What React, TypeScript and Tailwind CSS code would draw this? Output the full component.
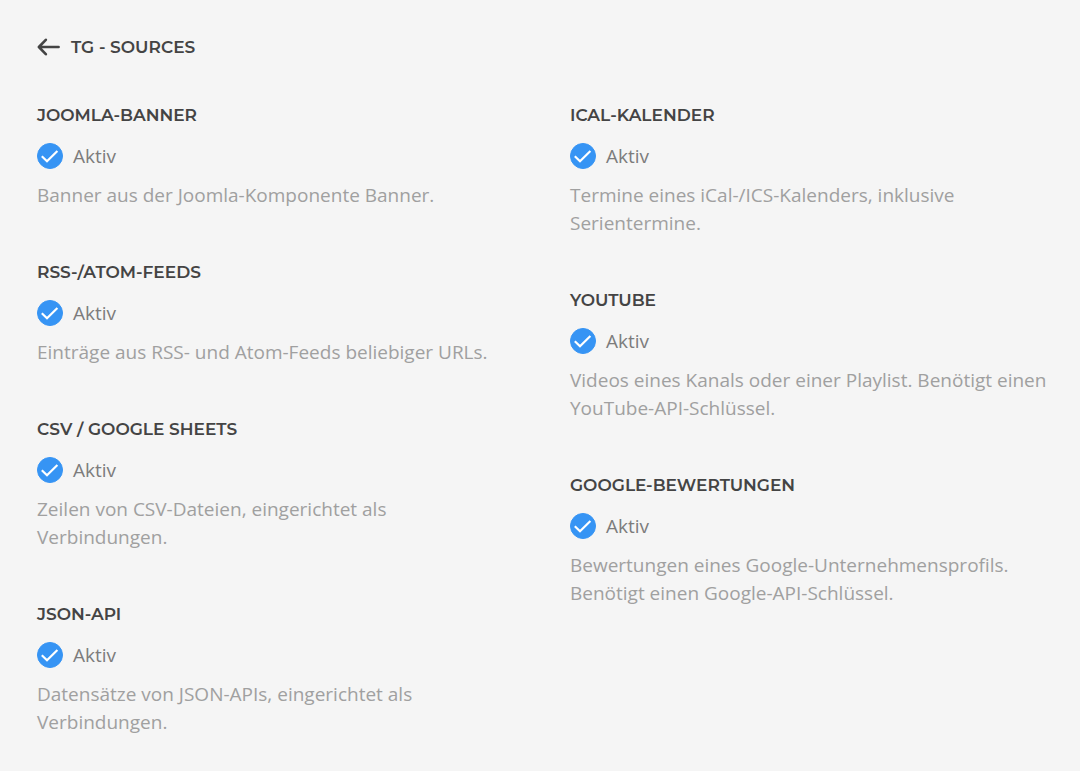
import React from "react";

type Source = {
  id: string;
  title: string;
  description: string;
};

const leftSources: Source[] = [
  {
    id: "joomla-banner",
    title: "Joomla-Banner",
    description: "Banner aus der Joomla-Komponente Banner.",
  },
  {
    id: "feeds",
    title: "RSS-/Atom-Feeds",
    description: "Einträge aus RSS- und Atom-Feeds beliebiger URLs.",
  },
  {
    id: "csv",
    title: "CSV / Google Sheets",
    description: "Zeilen von CSV-Dateien, eingerichtet als Verbindungen.",
  },
  {
    id: "json-api",
    title: "JSON-API",
    description: "Datensätze von JSON-APIs, eingerichtet als Verbindungen.",
  },
];

const rightSources: Source[] = [
  {
    id: "ical",
    title: "iCal-Kalender",
    description: "Termine eines iCal-/ICS-Kalenders, inklusive Serientermine.",
  },
  {
    id: "youtube",
    title: "YouTube",
    description:
      "Videos eines Kanals oder einer Playlist. Benötigt einen YouTube-API-Schlüssel.",
  },
  {
    id: "google-reviews",
    title: "Google-Bewertungen",
    description:
      "Bewertungen eines Google-Unternehmensprofils. Benötigt einen Google-API-Schlüssel.",
  },
];

const SourceItem = ({ id, title, description }: Source) => {
  return (
    <section>
      <h2 className="mb-4 font-['Montserrat','Inter',sans-serif] text-[17px] leading-6 font-semibold uppercase text-[#444444]">
        {title}
      </h2>
      <label htmlFor={id} className="flex w-fit cursor-pointer items-center gap-[10px]">
        <span className="grid size-[26px]">
          <input
            type="checkbox"
            id={id}
            name={id}
            defaultChecked
            className="peer col-start-1 row-start-1 size-[26px] appearance-none rounded-full border border-gray-300 bg-white checked:border-[#3694f4] checked:bg-[#3694f4]"
          />
          <svg
            viewBox="0 0 26 26"
            fill="none"
            stroke="#ffffff"
            strokeWidth="2.2"
            className="pointer-events-none invisible col-start-1 row-start-1 size-[26px] peer-checked:visible"
          >
            <path d="M4.8 13.2 10 18.2 20.4 8" />
          </svg>
        </span>
        <span className="text-[19px] leading-[26px] text-[#7c7c7c]">Aktiv</span>
      </label>
      <p className="mt-3 max-w-[480px] text-[19px] leading-7 text-[#a0a0a0]">
        {description}
      </p>
    </section>
  );
};

const App = () => {
  return (
    <main className="min-h-screen bg-[#f5f5f5] pt-[35px] pr-[30px] pb-[35px] pl-[37px] font-['Open_Sans',sans-serif]">
      <a href="#" className="flex w-fit items-center gap-[11px] text-[#444444]">
        <svg
          viewBox="0 0 23 18"
          fill="none"
          stroke="currentColor"
          strokeWidth="2.6"
          className="h-[18px] w-[23px]"
        >
          <path
            d="M8.8 1.8 1.9 9l6.9 7.2M2.2 9h19.4"
            strokeLinecap="round"
            strokeLinejoin="round"
          />
        </svg>
        <h1 className="font-['Montserrat','Inter',sans-serif] text-[17px] leading-6 font-semibold uppercase">
          TG - Sources
        </h1>
      </a>

      <div className="mt-11 grid grid-cols-1 gap-[53px] md:grid-cols-2">
        <div className="flex flex-col gap-[51px]">
          {leftSources.map((source) => (
            <SourceItem key={source.id} {...source} />
          ))}
        </div>
        <div className="flex flex-col gap-[51px]">
          {rightSources.map((source) => (
            <SourceItem key={source.id} {...source} />
          ))}
        </div>
      </div>
    </main>
  );
};

export default App;
